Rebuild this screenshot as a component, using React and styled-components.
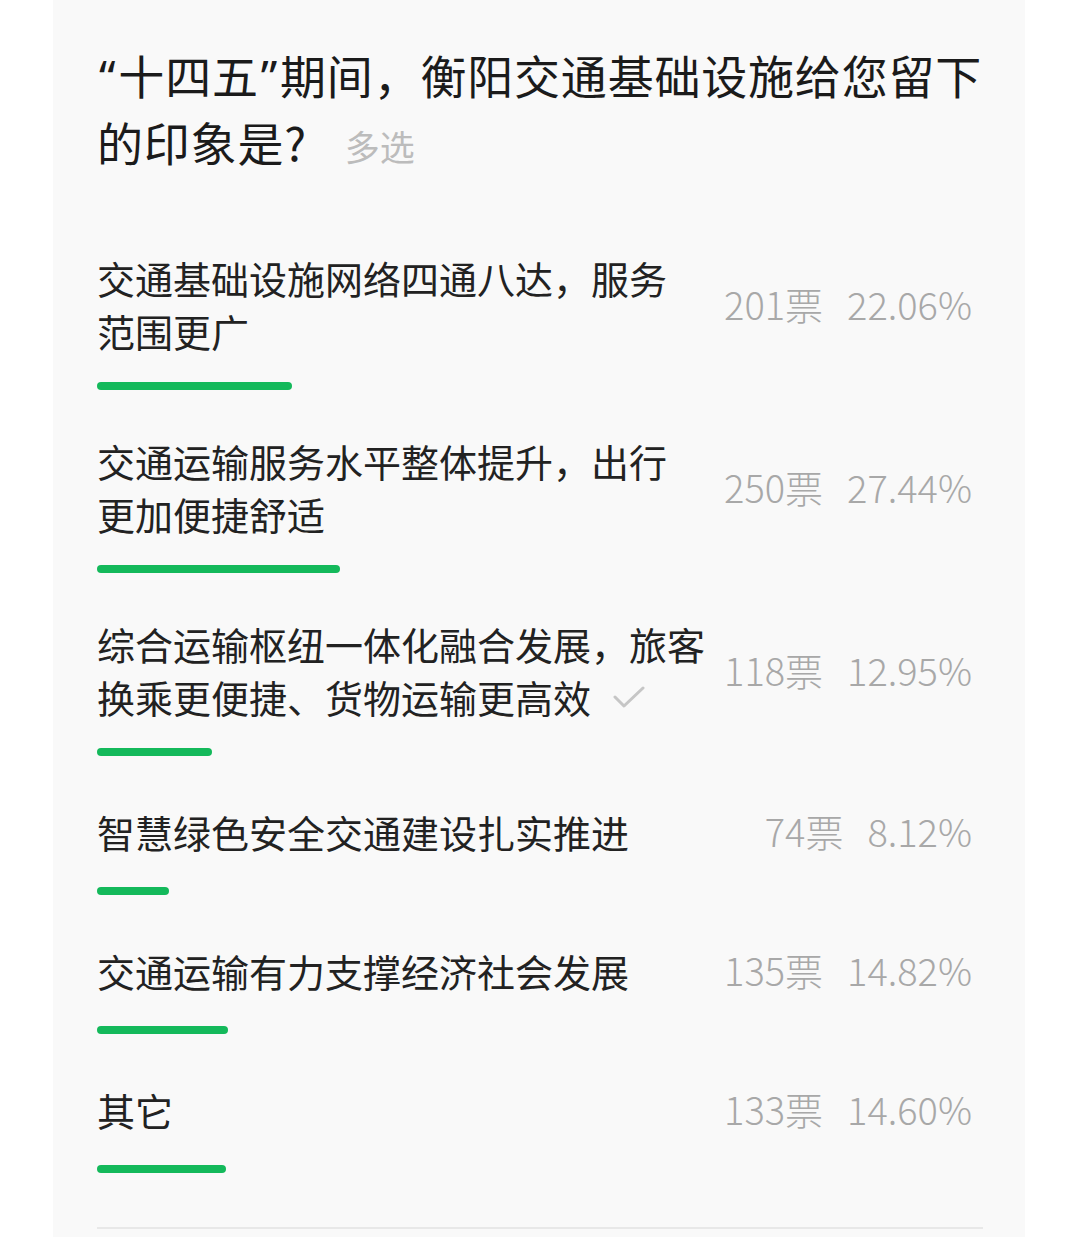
import React from 'react'
import styled, { createGlobalStyle } from 'styled-components'

const GlobalStyle = createGlobalStyle`
    html, body {
        margin: 0;
        padding: 0;
        background: #ffffff;
    }
    body {
        font-family: "Noto Sans CJK SC", "Noto Sans", sans-serif;
        -webkit-font-smoothing: antialiased;
    }
`

const Page = styled.div`
    width: 1080px;
    height: 1237px;
    overflow: hidden;
    background: #ffffff;
`

const Card = styled.section`
    margin-left: 53px;
    width: 972px;
    min-height: 1237px;
    box-sizing: border-box;
    padding: 42px 42px 0 44px;
    background: #f9f9f9;
`

const Title = styled.h1`
    margin: 0 0 29px;
    font-size: 46px;
    line-height: 65px;
    font-weight: 400;
    letter-spacing: 0.8px;
    color: #1b1b1b;
`

const Quote = styled.span`
    font-family: "Noto Sans", "Liberation Sans", sans-serif;
    padding: 0 2px;
`

const Multi = styled.span`
    margin-left: 38px;
    font-size: 35px;
    letter-spacing: 0;
    color: #bcbcbc;
`

const Option = styled.div`
    padding-top: 44px;
`

const Row = styled.div`
    display: flex;
    align-items: center;
    gap: 30px;
    min-height: 62px;
`

const Label = styled.div`
    flex: 1;
    min-width: 0;
    font-size: 38px;
    line-height: 53px;
    color: #222222;
`

const Line = styled.div`
    white-space: nowrap;
`

const Check = styled.svg`
    display: inline-block;
    width: 32px;
    height: 24px;
    margin-left: 22px;
    vertical-align: 4px;
`

const Stats = styled.div`
    flex-shrink: 0;
    display: flex;
    gap: 24px;
    margin-right: 11px;
    font-size: 38px;
    line-height: 62px;
    font-weight: 300;
    color: #a8a8a8;
`

const Bar = styled.div`
    margin-top: 25px;
    height: 8px;
    border-radius: 4px;
    background: #14b95b;
`

const Divider = styled.hr`
    margin: 54px 0 0;
    border: 0;
    border-top: 2px solid #e8e8e8;
`

const options = [
    { lines: [ '交通基础设施网络四通八达，服务', '范围更广' ], votes: 201, pct: '22.06' },
    { lines: [ '交通运输服务水平整体提升，出行', '更加便捷舒适' ], votes: 250, pct: '27.44' },
    { lines: [ '综合运输枢纽一体化融合发展，旅客', '换乘更便捷、货物运输更高效' ], votes: 118, pct: '12.95', checked: true },
    { lines: [ '智慧绿色安全交通建设扎实推进' ], votes: 74, pct: '8.12' },
    { lines: [ '交通运输有力支撑经济社会发展' ], votes: 135, pct: '14.82' },
    { lines: [ '其它' ], votes: 133, pct: '14.60' },
]

function App () {
    return (
        <Page>
            <GlobalStyle />
            <Card>
                <Title>
                    <Quote>“</Quote>十四五<Quote>”</Quote>期间，衡阳交通基础设施给您留下的印象是?
                    <Multi>多选</Multi>
                </Title>
                { options.map((opt) => (
                    <Option key={opt.votes}>
                        <Row>
                            <Label>
                                { opt.lines.map((line, i) => (
                                    <Line key={line}>
                                        { line }
                                        { opt.checked && i === opt.lines.length - 1 && (
                                            <Check viewBox="0 0 32 24" fill="none">
                                                <polyline points="2,12 11,21 30,3" stroke="#c6c6c6" strokeWidth="3" strokeLinecap="round" strokeLinejoin="round" />
                                            </Check>
                                        ) }
                                    </Line>
                                )) }
                            </Label>
                            <Stats>
                                <span>{ opt.votes }票</span>
                                <span>{ opt.pct }%</span>
                            </Stats>
                        </Row>
                        <Bar style={{ width: `${ parseFloat(opt.pct) }%` }} />
                    </Option>
                )) }
                <Divider />
            </Card>
        </Page>
    )
}

export default App
